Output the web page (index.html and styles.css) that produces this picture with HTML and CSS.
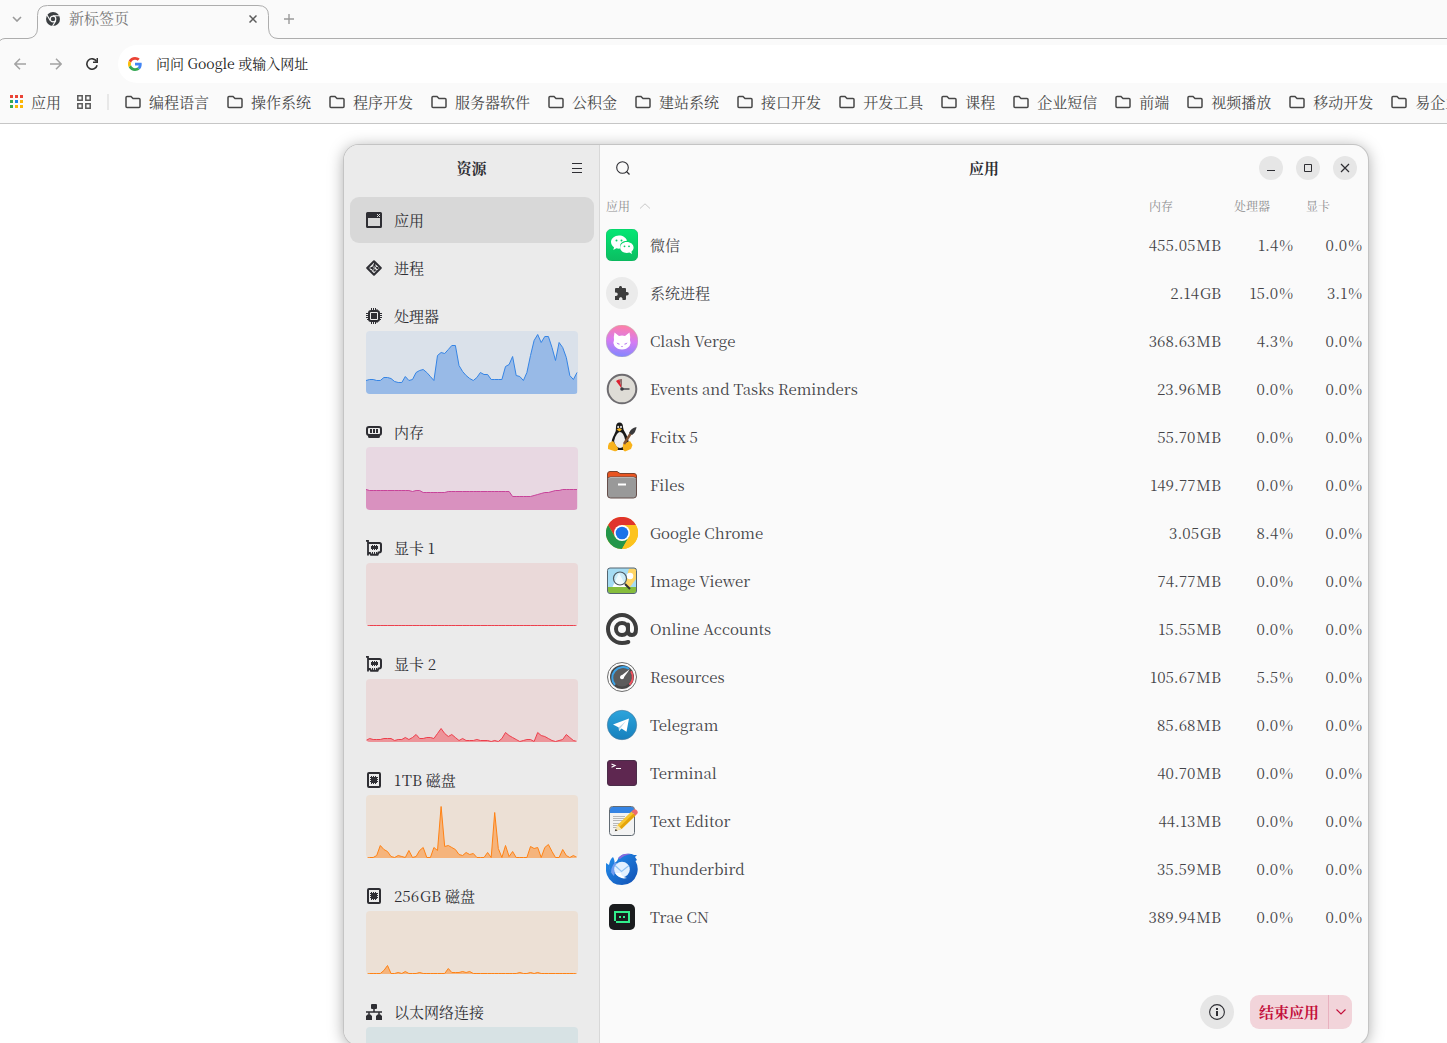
FILE: index.html
```html
<!DOCTYPE html>
<html lang="zh-CN">
<head>
  <meta charset="UTF-8">
  <title>新标签页</title>
  <link rel="stylesheet" href="styles.css">
</head>
<body>

<!-- shared icons -->
<svg class="defs" aria-hidden="true">
  <symbol id="folder" viewBox="0 0 16 16"><path d="M1 3.5Q1 2.5 2 2.5H6L8 4.5H14Q15 4.5 15 5.5V12.5Q15 13.5 14 13.5H2Q1 13.5 1 12.5Z" fill="none" stroke="#474747" stroke-width="1.5"/></symbol>
  <symbol id="gpu" viewBox="0 0 16 16"><path d="M0 .8H2V15.5" fill="none" stroke="#2e2e33" stroke-width="1.8"/><path d="M2 3H13.5Q15 3 15 4.5V10.5Q15 12.5 13 12.5H12.5L11.5 14.8H5L4 13H2" fill="none" stroke="#2e2e33" stroke-width="2"/><path d="M5 6H12V9H5ZM6 5H7V10H6ZM8 5H9V10H8ZM10 5H11V10H10ZM6 12H7V14H6ZM8 12H9V14H8ZM10 12H11V14H10Z" fill="#2e2e33"/></symbol>
  <symbol id="disk" viewBox="0 0 16 16"><rect x="2" y="1" width="12" height="14" rx="1" fill="none" stroke="#2e2e33" stroke-width="2"/><path d="M5 5H11V11H5ZM5 4H6V12H5ZM7 4H8V12H7ZM9 4H10V12H9ZM4 5H12V6H4ZM4 7H12V8H4ZM4 9H12V10H4Z" fill="#2e2e33"/></symbol>
</svg>

<header class="browser">
  <div class="tabstrip">
    <svg class="tab-shape" width="278" height="42" viewBox="0 0 278 42"><path d="M0 40.5Q2 38.5 5 38.5H28Q37.5 37.5 37.5 28V15.5Q37.5 5.5 47.5 5.5H258Q268.5 5.5 268.5 15.5V28Q269 38.5 278 38.5" fill="none" stroke="#adadad"/></svg>
    <button class="tab-search" aria-label="搜索标签页"><svg width="10" height="6" viewBox="0 0 10 6"><path d="M1 1L5 5L9 1" fill="none" stroke="#9a9a9a" stroke-width="1.6"/></svg></button>
    <div class="tab">
      <svg width="14" height="14" viewBox="0 0 14 14"><circle cx="7" cy="7" r="7" fill="#3c4043"/><path d="M7 3.8H13.5M4.2 8.6L1 3M9.800 8.600L6.600 14" stroke="#fafafa" stroke-width="1.1"/><circle cx="7" cy="7" r="2.8" fill="#3c4043" stroke="#fafafa" stroke-width="1.2"/></svg>
      <span class="tab-title">新标签页</span>
      <button aria-label="关闭"><svg width="8" height="8" viewBox="0 0 8 8"><path d="M.5 .5L7.5 7.5M7.5 .5L.5 7.5" stroke="#5c5c5c" stroke-width="1.5"/></svg></button>
    </div>
    <button class="new-tab" aria-label="新建标签页"><svg width="10" height="10" viewBox="0 0 10 10"><path d="M5 0V10M0 5H10" stroke="#9a9a9a" stroke-width="1.4"/></svg></button>
    <div class="strip-line"></div>
  </div>

  <div class="toolbar">
    <button aria-label="后退"><svg width="12" height="12" viewBox="0 0 12 12"><path d="M12 6H1M6 .8L.9 6L6 11.2" fill="none" stroke="#a3a3a3" stroke-width="1.5"/></svg></button>
    <button aria-label="前进"><svg width="12" height="12" viewBox="0 0 12 12"><path d="M0 6H11M6 .8L11.1 6L6 11.2" fill="none" stroke="#a3a3a3" stroke-width="1.5"/></svg></button>
    <button aria-label="刷新"><svg width="12" height="12" viewBox="0 0 12 12"><path d="M10.600 3.500A5.200 5.200 0 1 0 11.100 7.200" fill="none" stroke="#333" stroke-width="1.6"/><path d="M12 0V5H7V3.600H10.500V0Z" fill="#333"/></svg></button>
    <label class="omnibox">
      <svg width="14" height="14" viewBox="0 0 48 48"><path fill="#EA4335" d="M24 9.500c3.540 0 6.710 1.220 9.210 3.600l6.850-6.850C35.900 2.380 30.470 0 24 0 14.620 0 6.510 5.380 2.560 13.220l7.980 6.190C12.430 13.720 17.740 9.500 24 9.500z"/><path fill="#4285F4" d="M46.980 24.550c0-1.570-.15-3.090-.38-4.550H24v9.020h12.940c-.58 2.960-2.260 5.480-4.780 7.180l7.730 6c4.510-4.180 7.090-10.360 7.090-17.650z"/><path fill="#FBBC05" d="M10.530 28.590c-.48-1.450-.76-2.990-.76-4.590s.27-3.140.76-4.590l-7.980-6.190C.92 16.460 0 20.120 0 24c0 3.880.92 7.540 2.560 10.780l7.970-6.190z"/><path fill="#34A853" d="M24 48c6.480 0 11.930-2.130 15.890-5.810l-7.730-6c-2.150 1.450-4.920 2.300-8.160 2.300-6.260 0-11.570-4.220-13.470-9.910l-7.980 6.190C6.510 42.620 14.620 48 24 48z"/></svg>
      <input type="text" placeholder="问问 Google 或输入网址">
    </label>
  </div>

  <nav class="bookmarks">
    <a href="#" class="apps"><svg width="13" height="13" viewBox="0 0 13 13"><path d="M0 0H3V3H0ZM5 0H8V3H5ZM10 0H13V3H10Z" fill="#ea4335"/><path d="M0 5H3V8H0ZM0 10H3V13H0Z" fill="#34a853"/><path d="M5 5H8V8H5Z" fill="#1a83e8"/><path d="M10 5H13V8H10ZM5 10H8V13H5ZM10 10H13V13H10Z" fill="#fbb605"/></svg>应用</a>
    <button class="groups" aria-label="标签页分组"><svg width="14" height="14" viewBox="0 0 14 14"><path d="M.8 .8H5.200V5.200H.8ZM8.800 .8H13.200V5.200H8.800ZM.8 8.800H5.200V13.200H.8ZM8.800 8.800H13.200V13.200H8.800Z" fill="none" stroke="#5a5a5a" stroke-width="1.5"/></svg></button>
    <a href="#"><svg width="16" height="16"><use href="#folder"/></svg>编程语言</a>
    <a href="#"><svg width="16" height="16"><use href="#folder"/></svg>操作系统</a>
    <a href="#"><svg width="16" height="16"><use href="#folder"/></svg>程序开发</a>
    <a href="#"><svg width="16" height="16"><use href="#folder"/></svg>服务器软件</a>
    <a href="#"><svg width="16" height="16"><use href="#folder"/></svg>公积金</a>
    <a href="#"><svg width="16" height="16"><use href="#folder"/></svg>建站系统</a>
    <a href="#"><svg width="16" height="16"><use href="#folder"/></svg>接口开发</a>
    <a href="#"><svg width="16" height="16"><use href="#folder"/></svg>开发工具</a>
    <a href="#"><svg width="16" height="16"><use href="#folder"/></svg>课程</a>
    <a href="#"><svg width="16" height="16"><use href="#folder"/></svg>企业短信</a>
    <a href="#"><svg width="16" height="16"><use href="#folder"/></svg>前端</a>
    <a href="#"><svg width="16" height="16"><use href="#folder"/></svg>视频播放</a>
    <a href="#"><svg width="16" height="16"><use href="#folder"/></svg>移动开发</a>
    <a href="#"><svg width="16" height="16"><use href="#folder"/></svg>易企业</a>
  </nav>
</header>

<div class="window">
  <aside class="sidebar">
    <div class="titlebar">
      <h2>资源</h2>
      <button class="menu" aria-label="菜单"><svg width="10" height="10" viewBox="0 0 10 10"><path d="M0 .5H10M0 5.5H10M0 9.5H10" stroke="#2e2e33"/></svg></button>
    </div>
    <nav class="side-list">
      <a href="#" class="item active"><span class="label"><svg width="16" height="16" viewBox="0 0 16 16"><path fill-rule="evenodd" d="M1.500 0H14.500Q16 0 16 1.500V14.500Q16 16 14.500 16H1.500Q0 16 0 14.500V1.500Q0 0 1.500 0ZM2 6V14H14V6Z" fill="#2e2e33"/><path d="M11 2L14 5M14 2L11 5" stroke="#ddd"/></svg>应用</span></a>
      <a href="#" class="item"><span class="label"><svg width="16" height="16" viewBox="0 0 16 16"><path d="M8 1.200L14.800 8L8 14.800L1.200 8Z" fill="none" stroke="#2e2e33" stroke-width="2" stroke-linejoin="round"/><path d="M3 8H5.500L8.500 5M8.500 3V6L12 8.500M5.500 10.500L8 8.500L10.500 11M8 8.500V6" fill="none" stroke="#2e2e33"/><path d="M7.500 4H9.500V6H7.500ZM10.500 7H12.500V9H10.500ZM5 7H7V9H5ZM7.500 9.500H9.500V11.500H7.500Z" fill="#2e2e33"/></svg>进程</span></a>
      <a href="#" class="item"><span class="label"><svg width="16" height="16" viewBox="0 0 16 16"><path d="M5.500 0V16M7.500 0V16M9.500 0V16M11 1V15M0 5.500H16M0 7.500H16M0 9.500H16M1 11.500H15" stroke="#2e2e33"/><rect x="3" y="3" width="10" height="10" rx="2" fill="#ebebeb" stroke="#2e2e33" stroke-width="2"/><path d="M5 5H11V11H5Z" fill="#2e2e33"/></svg>处理器</span><svg class="chart cpu" data-chart="cpu"></svg></a>
      <a href="#" class="item"><span class="label"><svg width="16" height="16" viewBox="0 0 16 16"><rect x="1" y="3" width="14" height="8" rx="2" fill="none" stroke="#2e2e33" stroke-width="2"/><path d="M4 5H6V9H4ZM7 5H9V9H7ZM10 5H12V9H10ZM2 11H14V12.500Q14 14 12.500 14H3.500Q2 14 2 12.500Z" fill="#2e2e33"/></svg>内存</span><svg class="chart memory" data-chart="memory"></svg></a>
      <a href="#" class="item"><span class="label"><svg width="16" height="16"><use href="#gpu"/></svg>显卡 1</span><svg class="chart gpu" data-chart="gpu1"></svg></a>
      <a href="#" class="item"><span class="label"><svg width="16" height="16"><use href="#gpu"/></svg>显卡 2</span><svg class="chart gpu" data-chart="gpu2"></svg></a>
      <a href="#" class="item"><span class="label"><svg width="16" height="16"><use href="#disk"/></svg>1&#8202;TB 磁盘</span><svg class="chart disk" data-chart="disk1"></svg></a>
      <a href="#" class="item"><span class="label"><svg width="16" height="16"><use href="#disk"/></svg>256&#8202;GB 磁盘</span><svg class="chart disk" data-chart="disk2"></svg></a>
      <a href="#" class="item"><span class="label"><svg width="16" height="16" viewBox="0 0 16 16"><path d="M5 1Q5 0 6 0H10Q11 0 11 1V4Q11 5 10 5H6Q5 5 5 4ZM0 12L1.500 10.500H4.500L6 12V16H0ZM10 12L11.500 10.500H14.500L16 12V16H10Z" fill="#2e2e33"/><path d="M8 4V8M3 11V8H13V11M0 8H16" fill="none" stroke="#2e2e33" stroke-width="1.5"/></svg>以太网络连接</span><svg class="chart network" data-chart="network"></svg></a>
    </nav>
  </aside>

  <main class="content">
    <div class="titlebar">
      <button class="search" aria-label="搜索"><svg width="14" height="14" viewBox="0 0 14 14"><circle cx="6.500" cy="6.500" r="5.800" fill="none" stroke="#2e2e33" stroke-width="1.1"/><path d="M10.500 10.500L13.500 13.500" stroke="#2e2e33" stroke-width="1.3"/></svg></button>
      <h2>应用</h2>
      <div class="controls">
        <button aria-label="最小化"><svg width="10" height="10" viewBox="0 0 10 10"><path d="M1 7.500H9" stroke="#2e2e33"/></svg></button>
        <button aria-label="最大化"><svg width="10" height="10" viewBox="0 0 10 10"><path d="M1.500 1.500H8.500V8.500H1.500Z" fill="none" stroke="#2e2e33"/></svg></button>
        <button aria-label="关闭"><svg width="10" height="10" viewBox="0 0 10 10"><path d="M1 1L9 9M9 1L1 9" stroke="#2e2e33" stroke-width="1.2"/></svg></button>
      </div>
    </div>

    <table class="apps-table">
      <thead>
        <tr><th>应用<svg width="12" height="6" viewBox="0 0 12 6"><path d="M1 5.500L6 .8L11 5.500" fill="none" stroke="#c8c8c8"/></svg></th><th class="mem">内存</th><th class="proc">处理器</th><th class="graph">显卡</th></tr>
      </thead>
      <tbody>
        <tr><td><span class="app"><svg width="32" height="32" viewBox="0 0 32 32"><defs><linearGradient id="g1" x2="0" y2="1"><stop stop-color="#04e774"/><stop offset="1" stop-color="#0bbd61"/></linearGradient></defs><rect width="32" height="32" rx="6" fill="url(#g1)" stroke="#0aa957" stroke-width=".5"/><path d="M13 6.500C8.500 6.500 5 9.500 5 13C5 15.200 6.300 17 8 18.200L7.300 21L10.400 19.300C12 19.800 13.500 19.700 14.300 19.500C13 14.500 16.500 12 21 11.800C20 8.500 17 6.500 13 6.500Z" fill="#fff"/><path d="M20.800 13C17 13 14.200 15.400 14.200 18.600S17 24 20.800 24C21.700 24 22.600 23.900 23.400 23.600L26 25L25.400 22.800C26.800 21.800 27.600 20.200 27.600 18.600C27.600 15.400 24.600 13 20.800 13Z" fill="#fff"/><g fill="#07cf69"><circle cx="10.500" cy="11.500" r="1"/><circle cx="15.500" cy="11.500" r="1"/><circle cx="18.500" cy="17.300" r=".9"/><circle cx="23" cy="17.300" r=".9"/></g></svg>微信</span></td><td>455.05&#8202;MB</td><td>1.4&#8202;%</td><td>0.0&#8202;%</td></tr>
        <tr><td><span class="app"><svg width="32" height="32" viewBox="0 0 32 32"><circle cx="16" cy="16" r="16" fill="#ebebeb"/><path d="M9 12Q9 11 10 11H13V10.500C13 8.500 16 8.500 16 10.500V11H19Q20 11 20 12V15H21C23.300 15 23.300 18.500 21 18.500H20V22Q20 23 19 23H16.500V22C16.500 19.600 13 19.600 13 22V23H9V19H10C12.300 19 12.300 15.500 10 15.500H9Z" fill="#3d3d3d"/></svg>系统进程</span></td><td>2.14&#8202;GB</td><td>15.0&#8202;%</td><td>3.1&#8202;%</td></tr>
        <tr><td><span class="app"><svg width="32" height="32" viewBox="0 0 32 32"><defs><linearGradient id="g2" x1=".5" x2=".4" y2="1"><stop stop-color="#ff7fa5"/><stop offset=".5" stop-color="#d57bf3"/><stop offset="1" stop-color="#8087ff"/></linearGradient></defs><circle cx="16" cy="16" r="16" fill="url(#g2)" stroke="#bba" stroke-width=".5"/><path d="M8.500 7.500L13 11Q16 10.200 19 11L23.500 7.500Q24.500 12 24 15Q25.500 18 23.500 21Q20.500 24.500 16 24.500T8.500 21Q6.500 18 8 15Q7.500 12 8.500 7.500Z" fill="#fff"/><path d="M10.500 17.500L14 19Q12 20.500 10.500 17.500ZM21.500 17.500L18 19Q20 20.500 21.500 17.500ZM15 21H17L16 22.300Z" fill="#b36cf0"/></svg>Clash Verge</span></td><td>368.63&#8202;MB</td><td>4.3&#8202;%</td><td>0.0&#8202;%</td></tr>
        <tr><td><span class="app"><svg width="32" height="32" viewBox="0 0 32 32"><circle cx="16" cy="16" r="14.300" fill="#dedcd6" stroke="#6e6c70" stroke-width="2"/><path d="M16 16L10 8Q11.500 6.800 13.500 6.200Z" fill="#dc2030"/><path d="M16 16L13.500 6.200L16 6Z" fill="#8c6c6c"/><path d="M16 16H23.500" stroke="#4a4a50" stroke-width="1.500"/><circle cx="16" cy="16" r="1.800" fill="#3b3b42"/></svg>Events and Tasks Reminders</span></td><td>23.96&#8202;MB</td><td>0.0&#8202;%</td><td>0.0&#8202;%</td></tr>
        <tr><td><span class="app"><svg width="32" height="32" viewBox="0 0 32 32"><path d="M10 6Q10 1.500 13.500 1.500T17 6Q17 9 20 13Q24 20 22 26L18 29H9L6 23Q5 19 8 14Q10.500 10 10 6Z" fill="#181818"/><path d="M11 13Q14 9 17 13Q21 20 18 25Q14 29 10 25Q6 20 11 13Z" fill="#eee"/><ellipse cx="12.200" cy="6" rx="1" ry="1.300" fill="#ddd"/><ellipse cx="15" cy="6" rx="1" ry="1.300" fill="#ddd"/><path d="M10.500 8.500L13.500 7L16 8.500L13.500 10.500Z" fill="#f2b01d"/><path d="M3 22L7 20L12 27Q12 31 8 30L2 28Q1.500 25 3 22ZM17 23L24 20L26.500 24L25 28L19 30.500Q16 30 17 23Z" fill="#f8b21b"/><path d="M18 23L25 12" stroke="#805336" stroke-width="2.500"/><path d="M23 12Q25 7 30.500 6Q30 11 26 14Z" fill="#3a3a3c"/></svg>Fcitx 5</span></td><td>55.70&#8202;MB</td><td>0.0&#8202;%</td><td>0.0&#8202;%</td></tr>
        <tr><td><span class="app"><svg width="32" height="32" viewBox="0 0 32 32"><path d="M1.500 5Q1.500 2.500 4 2.500H11L14 4.500H28Q30.500 4.500 30.500 7V20H1.500Z" fill="#e95420" stroke="#7b432f"/><rect x="1.500" y="8" width="29" height="21" rx="3" fill="#999" stroke="#654e4a"/><path d="M2.500 10Q3 8.500 5 8.500H27Q29 8.500 29.500 10" fill="none" stroke="#b6b6b6"/><rect x="12" y="14.500" width="8" height="2" fill="#fff"/></svg>Files</span></td><td>149.77&#8202;MB</td><td>0.0&#8202;%</td><td>0.0&#8202;%</td></tr>
        <tr><td><span class="app"><svg width="32" height="32" viewBox="0 0 32 32"><circle cx="16" cy="16" r="16" fill="#fcc31e"/><path d="M2.100 8A16 16 0 0 1 29.900 8H16L9.100 20Z" fill="#e0342c"/><path d="M2.100 8A16 16 0 0 0 16 32L22.900 20H9.100Z" fill="#24964a"/><path d="M16 8H29.900A16 16 0 0 1 16 32L22.900 20Z" fill="#fcc31e"/><circle cx="16" cy="16" r="8" fill="#fff"/><circle cx="16" cy="16" r="6.300" fill="#1a73e8"/></svg>Google Chrome</span></td><td>3.05&#8202;GB</td><td>8.4&#8202;%</td><td>0.0&#8202;%</td></tr>
        <tr><td><span class="app"><svg width="32" height="32" viewBox="0 0 32 32"><rect x="1.500" y="3" width="29" height="25.500" rx="2.500" fill="#a5dcf3"/><path d="M23 3.500H30V14L24 22H18Z" fill="#ffd564"/><path d="M6 23L13 8L21 23Z" fill="#fff"/><circle cx="24" cy="11" r="3.300" fill="#fff"/><path d="M2 22H30V26Q30 28 28 28H4Q2 28 2 26Z" fill="#86bd3c"/><rect x="1.500" y="3" width="29" height="25.500" rx="2.500" fill="none" stroke="#546570"/><circle cx="14" cy="13.500" r="6.500" fill="#e5f6fc" fill-opacity=".6" stroke="#4d5a62" stroke-width="1.200"/><path d="M19 19L24 24" stroke="#333" stroke-width="2"/></svg>Image Viewer</span></td><td>74.77&#8202;MB</td><td>0.0&#8202;%</td><td>0.0&#8202;%</td></tr>
        <tr><td><span class="app"><svg width="32" height="32" viewBox="0 0 32 32"><g fill="none" stroke="#3d3d3d" stroke-width="4" stroke-linecap="round"><circle cx="16" cy="16" r="6"/><path d="M22 11.500V18Q22 22 26 22Q30 22 30 16A14 14 0 1 0 16 30Q19.500 30 22.300 29"/></g></svg>Online Accounts</span></td><td>15.55&#8202;MB</td><td>0.0&#8202;%</td><td>0.0&#8202;%</td></tr>
        <tr><td><span class="app"><svg width="32" height="32" viewBox="0 0 32 32"><circle cx="16" cy="16" r="14.500" fill="#fafafa" stroke="#6d6d6d"/><circle cx="16" cy="16" r="12" fill="#484848"/><circle cx="16" cy="16" r="9.500" fill="#5c5c5c"/><path d="M9 24A10.800 10.800 0 0 1 23 7.800" fill="none" stroke="#3da2e5" stroke-width="2"/><path d="M25 10.200A10.800 10.800 0 0 1 23.500 23.800" fill="none" stroke="#ef5360" stroke-width="2"/><path d="M14.800 15L24 8L17.200 17.200Z" fill="#fff"/><circle cx="16" cy="16.200" r="2" fill="#fff"/></svg>Resources</span></td><td>105.67&#8202;MB</td><td>5.5&#8202;%</td><td>0.0&#8202;%</td></tr>
        <tr><td><span class="app"><svg width="32" height="32" viewBox="0 0 32 32"><defs><linearGradient id="g3" x2="0" y2="1"><stop stop-color="#2ca4dc"/><stop offset="1" stop-color="#1680bd"/></linearGradient></defs><circle cx="16" cy="16" r="14.700" fill="url(#g3)" stroke="#49789a" stroke-width=".6"/><path d="M7 15.500L23 9.500L20.500 22.800L15.500 19.500L13 22L12.800 18.500Z" fill="#fff"/><path d="M12.800 18.200L20 12L14.500 19L13 22Z" fill="#b9d8ea"/></svg>Telegram</span></td><td>85.68&#8202;MB</td><td>0.0&#8202;%</td><td>0.0&#8202;%</td></tr>
        <tr><td><span class="app"><svg width="32" height="32" viewBox="0 0 32 32"><rect x="1.500" y="3.500" width="29" height="25" rx="2.500" fill="#5e2750" stroke="#4b2d49"/><path d="M5.500 7L9 8.500L5.500 10.200M10 11.500H15" fill="none" stroke="#fff" stroke-width="1.200"/></svg>Terminal</span></td><td>40.70&#8202;MB</td><td>0.0&#8202;%</td><td>0.0&#8202;%</td></tr>
        <tr><td><span class="app"><svg width="32" height="32" viewBox="0 0 32 32"><rect x="3.500" y="1.500" width="25" height="29" rx="3" fill="#f3f3f3"/><path d="M4 8V4Q4 2 6 2H26Q28 2 28 4V8Z" fill="#3584e4"/><path d="M7 11.500H19M7 13.500H19M7 15.500H17M7 18.500H15M7 20.500H13M7 22.500H11" stroke="#b8b8b8"/><rect x="3.500" y="1.500" width="25" height="29" rx="3" fill="none" stroke="#626b73"/><path d="M9 26L11.500 20L25.500 6.500L29.500 10.500L15.500 24Z" fill="#f8c631"/><path d="M13.500 22L27.500 8.500L29.500 10.500L15.500 24Z" fill="#e5a50a"/><path d="M9 26L11.500 20L15.500 24Z" fill="#f6e6b8"/><path d="M8.800 26.300L9.700 24L11.500 25.400Z" fill="#333"/><path d="M25.500 6.500L27 5Q29 3.500 31 5.500Q32.500 7.500 31 9L29.500 10.500Z" fill="#ed6b6e"/></svg>Text Editor</span></td><td>44.13&#8202;MB</td><td>0.0&#8202;%</td><td>0.0&#8202;%</td></tr>
        <tr><td><span class="app"><svg width="32" height="32" viewBox="0 0 32 32"><defs><linearGradient id="g4" x2="1" y2="1"><stop stop-color="#2491ef"/><stop offset="1" stop-color="#114fb3"/></linearGradient></defs><path d="M0 10L3 12Q4 6 7 4Q9 7 8.500 10L11 8Q13 2 19 1Q25 0 28 2L31 2L29 4L31 7L29.500 8Q33 14 31 21Q27 32 16 32Q5 32 1 22Q-1 16 0 10Z" fill="url(#g4)"/><path d="M12 5Q17 -.5 25 1Q18 2 14 6Z" fill="#8c69dc"/><path d="M3 12Q4 20 8 23L11 10L8.500 10Q5 14 5 20Z" fill="#6f9df0"/><circle cx="16" cy="16.500" r="7.800" fill="#e2f0ff"/><path d="M9 12.500L15.500 18.500L23 12.500" fill="none" stroke="#90c2f3" stroke-width="1.200"/><path d="M9 20Q14 27 21 25Q15 23.500 15 20Z" fill="#fff"/></svg>Thunderbird</span></td><td>35.59&#8202;MB</td><td>0.0&#8202;%</td><td>0.0&#8202;%</td></tr>
        <tr><td><span class="app"><svg width="32" height="32" viewBox="0 0 32 32"><rect x="3" y="3" width="26" height="26" rx="5" fill="#1a1c1e"/><path fill-rule="evenodd" d="M8 10H24V22H10V20H8ZM10 12V20H22V12ZM13 15H15V17H13ZM17 15H19V17H17Z" fill="#32f08c"/></svg>Trae CN</span></td><td>389.94&#8202;MB</td><td>0.0&#8202;%</td><td>0.0&#8202;%</td></tr>
      </tbody>
    </table>

    <footer class="actions">
      <button class="info" aria-label="应用信息"><svg width="16" height="16" viewBox="0 0 16 16"><circle cx="8" cy="8" r="7.400" fill="none" stroke="#2e2e33" stroke-width="1.1"/><path d="M7 4H9V6H7ZM7 7H9V12H7Z" fill="#2e2e33"/></svg></button>
      <div class="split">
        <button class="end">结束应用</button>
        <button class="more" aria-label="更多"><svg width="10" height="6" viewBox="0 0 10 6"><path d="M.5 .5L5 5L9.500 .5" fill="none" stroke="#c30f3b" stroke-width="1.1"/></svg></button>
      </div>
    </footer>
  </main>
</div>

<script>
  // Usage history, one value per step
  const usage = {
    cpu: [14,15,15,14,14,17,17,16,13,12,12,18,14,15,22,24,25,22,18,14,39,42,41,45,49,49,29,23,19,16,14,17,22,20,20,15,15,15,15,28,30,38,19,18,14,22,39,54,60,52,58,58,47,34,52,47,37,19,15,22],
    memory: [21,20,20,20,20,20,20,20,20,20,20,20,20,19,20,20,18,18,18,18,18,18,18,19,19,19,19,19,19,19,19,19,19,19,19,19,19,19,19,19,19,14,14,14,14,14,14,15,16,17,18,18,19,20,20,21,21,21,21,21],
    gpu1: Array(60).fill(1),
    gpu2: [2,4,3,3,3,4,4,4,2,3,3,5,3,5,8,4,4,5,5,4,9,14,9,6,8,5,2,4,2,2,2,3,2,2,2,1,2,1,4,10,7,5,3,1,2,3,3,1,10,7,6,4,2,1,2,3,8,5,2,1],
    disk1: [1,1,1,3,13,9,7,2,1,3,2,1,8,1,2,8,11,1,1,11,8,52,12,13,11,9,4,3,6,4,5,1,1,1,6,1,46,10,1,13,2,7,1,1,1,1,12,10,11,1,11,14,7,1,1,9,3,1,3,1],
    disk2: [1,1,1,1,1,4,9,1,1,2,1,3,1,1,1,2,1,1,1,1,1,1,1,6,2,2,2,3,2,3,1,1,1,1,1,1,1,1,1,1,1,1,1,2,1,1,2,1,2,1,1,1,1,1,1,1,1,1,1,1],
    network: Array(60).fill(1)
  };

  document.querySelectorAll('.chart').forEach(chart => {
    const values = usage[chart.dataset.chart];
    const points = values.map((v, i) => `${(i * 211 / 59).toFixed(1)},${63.5 - v}`).join(' ');
    chart.setAttribute('viewBox', '0 0 212 63');
    chart.setAttribute('preserveAspectRatio', 'none');
    chart.innerHTML = `<polygon points="0,63 ${points} 211,63"/><polyline points="${points}"/>`;
  });
</script>

</body>
</html>
```
FILE: styles.css
```css
* { box-sizing: border-box; }
body { margin: 0; height: 100vh; overflow: hidden; background: #fff; color: #2e2e33; font: 15px/20px "Noto Serif CJK SC", "Liberation Serif", "Noto Sans CJK SC", serif; }
button { border: 0; padding: 0; background: none; font: inherit; color: inherit; display: flex; align-items: center; justify-content: center; }
a { color: inherit; text-decoration: none; }
svg { flex: none; }
.defs { position: absolute; width: 0; height: 0; }

/* browser */
.browser { background: #fafafa; border-bottom: 1px solid #c6c6c6; height: 124px; }
.tabstrip { position: relative; display: flex; height: 39px; }
.tab-shape { position: absolute; left: 0; top: 0; }
.tab-search { width: 34px; height: 38px; }
.tab { position: relative; display: flex; align-items: center; width: 234px; height: 38px; padding: 0 10px 0 12px; }
.tab-title { flex: 1; margin-left: 9px; padding-bottom: 2px; color: #777; }
.tab button { width: 10px; height: 10px; }
.new-tab { width: 42px; height: 38px; }
.strip-line { flex: 1; margin-left: -32px; border-bottom: 1px solid #adadad; }
.toolbar { display: flex; align-items: center; height: 50px; padding-left: 2px; }
.toolbar button { width: 36px; height: 36px; }
.omnibox { flex: 1; display: flex; align-items: center; gap: 14px; height: 38px; margin-left: 8px; padding-left: 10px; border-radius: 19px 0 0 19px; background: #fff; }
.omnibox input { flex: 1; border: 0; padding: 0 0 2px; outline: 0; background: none; font: inherit; font-size: 14px; }
.omnibox input::placeholder { color: #1c1c1c; }
.bookmarks { display: flex; align-items: center; gap: 18px; height: 26px; padding-left: 10px; overflow: hidden; white-space: nowrap; color: #474747; }
.bookmarks a { display: flex; align-items: center; gap: 8px; padding-bottom: 1px; }
.groups { width: 30px; height: 16px; margin-right: -2px; padding-right: 16px; border-right: 2px solid #e8e8e8; justify-content: flex-end; }

/* resources window */
.window { display: flex; min-height: 900px; margin: 21px 79px 0 344px; border-radius: 15px; overflow: hidden; background: #fafafa; box-shadow: 0 0 0 1px #c4c4c4, 0 2px 16px rgba(0, 0, 0, .36); }
.titlebar { display: flex; align-items: center; justify-content: center; position: relative; height: 46px; }
.titlebar h2 { margin: 0; font-size: 15px; line-height: 20px; font-weight: bold; }
.sidebar { flex: none; width: 256px; height: 900px; overflow: hidden; background: #ebebeb; border-right: 1px solid #d8d8d8; }
.menu { position: absolute; right: 5px; top: 6px; width: 34px; height: 34px; }
.side-list { display: flex; flex-direction: column; gap: 2px; padding: 6px 5px 0 6px; }
.item { display: block; padding: 0 16px; border-radius: 9px; }
.item.active { background: #d8d8d8; }
.label { display: flex; align-items: center; gap: 12px; height: 46px; }
.chart { display: block; width: 100%; height: 63px; margin: -8px 0 13px; border-radius: 4px; }
.chart polyline { fill: none; stroke-width: 1; }
.cpu { background: #dae1ea; fill: #98bae7; stroke: #3584e4; }
.memory { background: #e8d8e2; fill: #d991bf; stroke: #c74399; }
.gpu { background: #ead9d9; fill: #ed9499; stroke: #ed3f4c; }
.disk { background: #ece0d5; fill: #f5b47c; stroke: #ff8214; }
.network { background: #d7e2e4; fill: #8fc0c5; stroke: #3a9aa5; }
.chart polygon { stroke: none; }

.content { flex: 1; display: flex; flex-direction: column; }
.search { position: absolute; left: 6px; top: 6px; width: 34px; height: 34px; }
.controls { position: absolute; right: 11px; top: 11px; display: flex; gap: 13px; }
.controls button { width: 24px; height: 24px; border-radius: 12px; background: #e6e6e6; }
.apps-table { width: 100%; border-collapse: collapse; table-layout: fixed; color: #444448; }
.apps-table th { height: 30px; padding: 0 6px; text-align: left; font-size: 12px; line-height: 16px; font-weight: normal; color: #8e8e90; }
.apps-table th svg { margin-left: 9px; vertical-align: 2px; }
.apps-table .mem { width: 85px; padding-left: 7px; }
.apps-table .proc { width: 72px; padding-left: 7px; }
.apps-table .graph { width: 69px; padding-left: 7px; }
.apps-table td { height: 48px; padding: 0 6px; text-align: right; white-space: nowrap; }
.app { display: flex; align-items: center; gap: 12px; }
.actions { display: flex; align-items: center; justify-content: flex-end; gap: 16px; margin-top: auto; padding: 16px; }
.info { width: 34px; height: 34px; border-radius: 17px; background: #e6e6e6; }
.split { display: flex; height: 34px; border-radius: 9px; overflow: hidden; background: #f2d4da; color: #c30f3b; }
.end { width: 78px; font-weight: bold; }
.more { width: 24px; border-left: 1px solid #e8b1bf; }
```
